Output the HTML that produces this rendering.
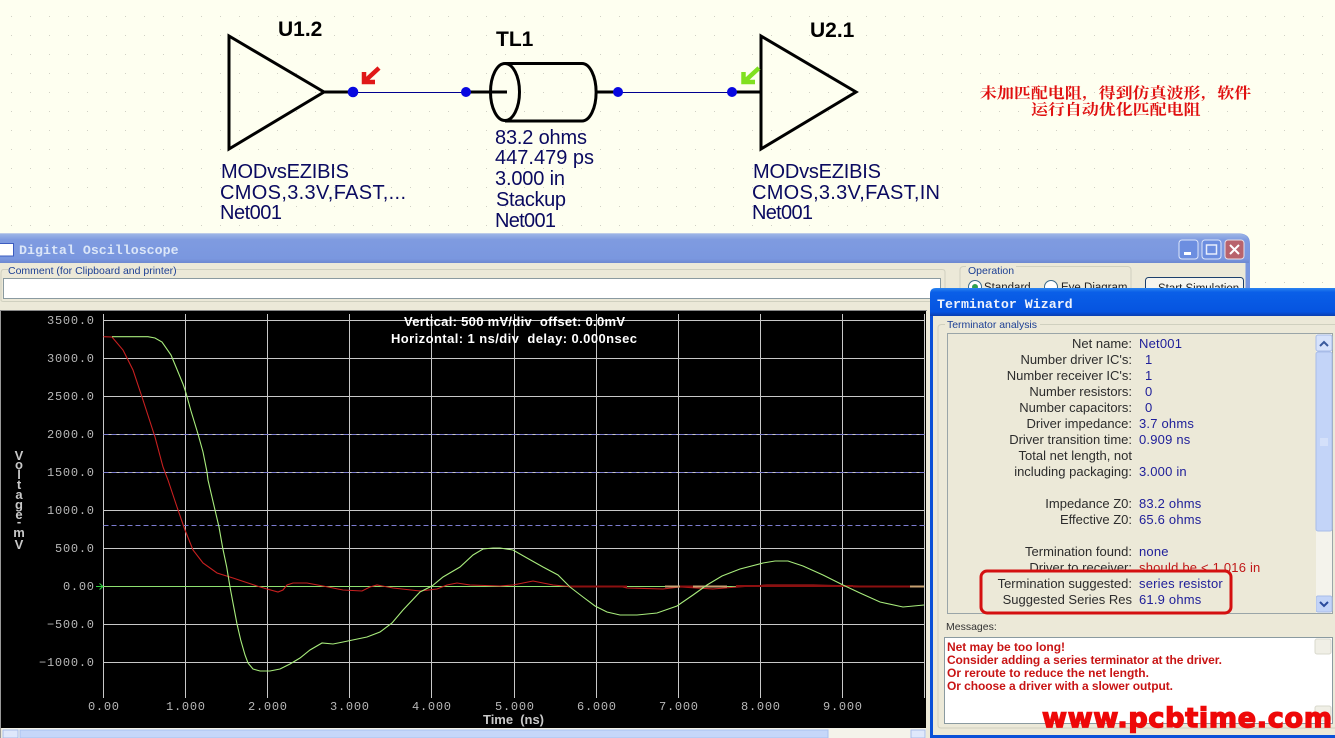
<!DOCTYPE html>
<html><head><meta charset="utf-8"><style>
html,body{margin:0;padding:0;background:#fefff0;overflow:hidden}
svg{display:block}
text{font-family:"Liberation Sans","Noto Sans CJK SC",sans-serif;white-space:pre}
.n{fill:#0a0a60;font-size:20px}
.a{fill:#b8b8b8;font-family:"Liberation Mono",monospace;font-size:12px}
.l{fill:#2c2c2c;font-size:13px;text-anchor:end}
.v{fill:#20209a;font-size:13px;letter-spacing:.2px}
.m{fill:#c81414;font-size:12px;font-weight:bold}
.g{fill:#1c3f94;font-size:10.5px}
.c{font-family:"Noto Serif CJK SC",serif;font-size:15px;font-weight:bold;fill:#e01010}
.tt{font-family:"Liberation Mono",monospace;font-size:13.300px;font-weight:bold}
</style></head><body>
<svg width="1335" height="738" viewBox="0 0 1335 738" xmlns="http://www.w3.org/2000/svg">
<defs>
<pattern id="d" x="11" y="16" width="19" height="19" patternUnits="userSpaceOnUse"><rect width="1" height="1" fill="#d0d0c4"/></pattern>
<linearGradient id="t1" x1="0" y1="0" x2="0" y2="1"><stop offset="0" stop-color="#9db5e6"/><stop offset=".2" stop-color="#7f9be0"/><stop offset=".85" stop-color="#7a97df"/><stop offset="1" stop-color="#6d88d0"/></linearGradient>
<linearGradient id="t2" x1="0" y1="0" x2="0" y2="1"><stop offset="0" stop-color="#2a85f0"/><stop offset=".15" stop-color="#0a5fe8"/><stop offset=".85" stop-color="#0654e0"/><stop offset="1" stop-color="#0a3fb0"/></linearGradient>
</defs>
<rect width="1335" height="738" fill="#fefff0"/>
<rect width="1335" height="238" fill="url(#d)"/>
<rect x="1250" y="230" width="85" height="60" fill="url(#d)"/>

<!-- schematic -->
<g fill="none" stroke="#000" stroke-width="3">
<path d="M229 36V149L324 92Z"/>
<path d="M761 36V149L856 92Z"/>
<path d="M324 92H353M466 92H507M596 92H618M732 92H761"/>
<ellipse cx="505" cy="92" rx="14.500" ry="28.500"/>
<path d="M505 63.500H582A14 28.500 0 0 1 582 121H505"/>
</g>
<path d="M353 92.500H466M618 92.500H732" stroke="#000090" stroke-width="1"/>
<g fill="#0808e0"><circle cx="353" cy="92" r="5.300"/><circle cx="466" cy="92" r="5"/><circle cx="618" cy="92" r="5"/><circle cx="732" cy="92" r="5"/></g>
<path d="M379 68L366 80M364 72V82H375" fill="none" stroke="#e01818" stroke-width="4.500"/>
<path d="M759 68L746 80M743.500 72V82H755" fill="none" stroke="#80e020" stroke-width="4.500"/>
<text x="278" y="36" font-size="21" font-weight="bold">U1.2</text>
<text x="496" y="46" font-size="21" font-weight="bold">TL1</text>
<text x="810" y="37" font-size="21" font-weight="bold">U2.1</text>
<text class="n" x="221" y="178" textLength="128">MODvsEZIBIS</text>
<text class="n" x="220" y="199" textLength="186">CMOS,3.3V,FAST,...</text>
<text class="n" x="220" y="219" textLength="62">Net001</text>
<text class="n" x="495" y="144" textLength="92">83.2 ohms</text>
<text class="n" x="495" y="164" textLength="99">447.479 ps</text>
<text class="n" x="495" y="185" textLength="70">3.000 in</text>
<text class="n" x="496" y="206" textLength="70">Stackup</text>
<text class="n" x="495" y="227" textLength="61">Net001</text>
<text class="n" x="753" y="178" textLength="128">MODvsEZIBIS</text>
<text class="n" x="752" y="199" textLength="188">CMOS,3.3V,FAST,IN</text>
<text class="n" x="752" y="219" textLength="61">Net001</text>
<text class="c" transform="translate(980 98) scale(1.130 1)" x="0 15 30 45 60 75 90 105 120 135 150 165 180 195 210 225">未加匹配电阻,得到仿真波形,软件</text>
<text class="c" transform="translate(1031 114.500) scale(1.130 1)" x="0 15 30 45 60 75 90 105 120 135">运行自动优化匹配电阻</text>

<!-- oscilloscope window -->
<path d="M0 233.500H1240Q1250 234 1250 244V738H0Z" fill="#7a97df"/>
<path d="M0 234H1240Q1249 234 1249 244V263H0Z" fill="url(#t1)"/>
<rect x="0" y="263" width="1247" height="475" fill="#ece9d8"/>
<path d="M1247 263V738" stroke="#7a97df" stroke-width="3"/>
<path d="M-1 243.500H13.500V256H-1Z" fill="#fff" stroke="#3c5cc0"/>
<text class="tt" x="19" y="254" fill="#dbe6f8">Digital Oscilloscope</text>
<g>
<rect x="1179" y="240" width="19" height="19" rx="3" fill="#6c8ee0" stroke="#dde6fa"/>
<rect x="1184" y="252" width="7" height="3" fill="#fff"/>
<rect x="1202" y="240" width="19" height="19" rx="3" fill="#6c8ee0" stroke="#dde6fa"/>
<rect x="1206.500" y="245" width="10" height="9" fill="none" stroke="#e8eefc" stroke-width="1.500"/>
<rect x="1225" y="240" width="19" height="19" rx="3" fill="#b8636c" stroke="#e8dfe4"/>
<path d="M1230 245L1239 254M1239 245L1230 254" stroke="#fff" stroke-width="2"/>
</g>
<path d="M8 269.500H3Q1 270 1 274V300Q1 301.500 4 301.500H944Q945 301 945 298V272Q945 269.500 942 269.500H176" fill="none" stroke="#d0d0bf"/>
<text class="g" x="8" y="274">Comment (for Clipboard and printer)</text>
<rect x="3.500" y="278.500" width="937" height="20" fill="#fff" stroke="#8a9aa0"/>
<path d="M1016 266.500H1128Q1131 267 1131 270V300M966 266.500H963Q960 267 960 270V300" fill="none" stroke="#d0d0bf"/>
<text class="g" x="968" y="274">Operation</text>
<circle cx="975" cy="287" r="6.500" fill="#fff" stroke="#3a6a8a"/><circle cx="975" cy="287" r="3" fill="#30a050"/>
<text x="984" y="291" font-size="11.500" fill="#222">Standard</text>
<circle cx="1051" cy="287" r="6.500" fill="#fff" stroke="#3a6a8a"/>
<text x="1061" y="291" font-size="11.500" fill="#222">Eye Diagram</text>
<rect x="1145.500" y="277.500" width="98" height="24" rx="3" fill="#f6f5ee" stroke="#1c3f6c"/>
<text x="1158" y="292" font-size="11.500" fill="#222">Start Simulation</text>

<!-- plot -->
<rect x="0" y="310" width="927" height="1" fill="#888"/>
<rect x="0" y="311" width="926" height="417" fill="#000"/>
<rect x="0" y="311" width="1" height="427" fill="#999"/>
<g stroke="#c8c8c8" stroke-width="1">
<path d="M103.500 320.500H924.500M103.500 358.500H924.500M103.500 396.500H924.500M103.500 434.500H924.500M103.500 472.500H924.500M103.500 510.500H924.500M103.500 548.500H924.500M103.500 586.500H924.500M103.500 624.500H924.500M103.500 662.500H924.500"/>
<path d="M103.500 314V698M185.500 314V698M267.500 314V698M349.500 314V698M431.500 314V698M514.500 314V698M596.500 314V698M678.500 314V698M760.500 314V698M842.500 314V698M924.500 314V698"/>
</g>
<g stroke="#7c7cd0" stroke-width="1" stroke-dasharray="5 3">
<path d="M103.500 434.500H924.500M103.500 472.500H924.500M103.500 525.500H924.500"/>
</g>
<rect x="104" y="525" width="820" height="1" fill="#000" opacity="0"/>
<g>
<text class="a" x="94" y="324" text-anchor="end" textLength="47">3500.0</text>
<text class="a" x="94" y="362" text-anchor="end" textLength="47">3000.0</text>
<text class="a" x="94" y="400" text-anchor="end" textLength="47">2500.0</text>
<text class="a" x="94" y="438" text-anchor="end" textLength="47">2000.0</text>
<text class="a" x="94" y="476" text-anchor="end" textLength="47">1500.0</text>
<text class="a" x="94" y="514" text-anchor="end" textLength="47">1000.0</text>
<text class="a" x="94" y="552" text-anchor="end" textLength="39">500.0</text>
<text class="a" x="94" y="590" text-anchor="end" textLength="31">0.00</text>
<text class="a" x="94" y="628" text-anchor="end" textLength="47">−500.0</text>
<text class="a" x="94" y="666" text-anchor="end" textLength="55">−1000.0</text>
</g>
<g>
<text class="a" x="88" y="710" textLength="31">0.00</text>
<text class="a" x="166" y="710" textLength="39">1.000</text>
<text class="a" x="248" y="710" textLength="39">2.000</text>
<text class="a" x="330" y="710" textLength="39">3.000</text>
<text class="a" x="412" y="710" textLength="39">4.000</text>
<text class="a" x="495" y="710" textLength="39">5.000</text>
<text class="a" x="577" y="710" textLength="39">6.000</text>
<text class="a" x="659" y="710" textLength="39">7.000</text>
<text class="a" x="741" y="710" textLength="39">8.000</text>
<text class="a" x="823" y="710" textLength="39">9.000</text>
</g>
<text x="483" y="724" font-size="13" font-weight="bold" fill="#c8c8c8" textLength="61">Time  (ns)</text>
<g font-size="13" font-weight="bold" fill="#c8c8c8" text-anchor="middle">
<text x="19" y="460">V</text><text x="19" y="469">o</text><text x="19" y="479">l</text><text x="19" y="489">t</text><text x="19" y="499">a</text><text x="19" y="509">g</text><text x="19" y="519">e</text><text x="19" y="526">-</text><text x="19" y="537">m</text><text x="19" y="549">V</text>
</g>
<text x="404" y="326" font-size="13" font-weight="bold" fill="#fff" textLength="221">Vertical: 500 mV/div  offset: 0.0mV</text>
<text x="391" y="343" font-size="13" font-weight="bold" fill="#fff" textLength="246">Horizontal: 1 ns/div  delay: 0.000nsec</text>
<path d="M96 586.500H103M99.500 583.500L103 586.500L99.500 589.500" fill="none" stroke="#30d040"/>
<!-- traces -->
<path d="M103.500 586.500H924" stroke="#8ee070" stroke-width="1"/>
<path d="M103.500 336.700L112 337L123 350L133 370L143 400L155 437L163 467L168 480L177 507L185 530L193 550L203 563L217 573L233 578L257 586L267 589L278 592L283 590L287 585L293 583L307 583L323 586L343 590L362 591L370 587L377 585L393 588L420 591L437 589L447 585L457 583L470 585L500 586L513 585L533 581L553 585L570 586.500L618 586L627 588L663 589L680 587L713 589L737 587L767 585L813 585L860 586L924 586.500" fill="none" stroke="#c82020" stroke-width="1.100"/>
<path d="M568 586.500H627M680 586.500H693M736 586H853M853 586.500H910" stroke="#8c1010" stroke-width="2" fill="none"/>
<path d="M665 586.500H680M693 586.500H727M910 586.500H924" stroke="#c8a070" stroke-width="2" fill="none"/>
<path d="M112 336.700H148L155 338L162 342L171 355L176 367L183 384L186 393L191 411L198 434L203 452L207 472L208 480L215 510L219 527L222.700 548L226.700 567L230 587L233 603L237 624L240.700 640L245 655L248 663L253 669L260 671L270 671L280 669L290 664L300 658L310 650L322 643L333 644L343 642L367 637L380 632L392 623L403 610L420 592L432 586L443 577L460 567L473 555L483 549L493 548L500 548L513 550L527 558L543 567L558 575L570 587L583 597L595 606L607 612L620 615L637 615L657 613L677 606L693 595L707 585L722 576L740 569L763 563L775 561L788 561L803 566L823 575L843 585L860 593L880 602L903 607L924 605" fill="none" stroke="#a8ec7c" stroke-width="1.100"/>
<!-- bottom scrollbar -->
<rect x="2" y="728" width="926" height="10" fill="#f4f3ea"/>
<rect x="3" y="730" width="15" height="8" fill="#dfe8fb" stroke="#a8bce8"/>
<rect x="20" y="730" width="808" height="8" fill="#c6d7f9" stroke="#a8c0f0"/>
<rect x="911" y="730" width="14" height="8" fill="#dfe8fb" stroke="#a8bce8"/>
<rect x="926" y="311" width="2" height="427" fill="#ece9d8"/>

<!-- terminator window -->
<rect x="930" y="294" width="405" height="444" fill="#0a50d8"/>
<path d="M930 316V294Q930 288 936 288H1335V316Z" fill="url(#t2)"/>
<rect x="933" y="316" width="402" height="419" fill="#ece9d8"/>
<text class="tt" x="937" y="308" fill="#eef2fc">Terminator Wizard</text>
<path d="M945 324.500H941Q938 325 938 328V725Q938 728 941 728H1335M1040 324.500H1335" fill="none" stroke="#d0d0bf"/>
<text class="g" x="947" y="328" textLength="90">Terminator analysis</text>
<rect x="947.500" y="333.500" width="385" height="280" fill="#ece9d8" stroke="#9aa5a8"/>
<rect x="1316" y="334" width="16" height="279" fill="#f4f3ec"/>
<rect x="1316" y="335" width="16" height="16" rx="2" fill="#d6e2fb" stroke="#a8bce8"/>
<path d="M1320 346L1324 342L1328 346" fill="none" stroke="#3a5a9c" stroke-width="2"/>
<rect x="1316" y="352" width="16" height="179" rx="2" fill="#c3d4f8" stroke="#a8bce8"/>
<path d="M1320 439H1328M1320 441H1328M1320 443H1328M1320 445H1328" stroke="#e4ecfc"/>
<rect x="1316" y="596" width="16" height="16" rx="2" fill="#c3d4f8" stroke="#a8bce8"/>
<path d="M1320 602L1324 606L1328 602" fill="none" stroke="#2a4a9c" stroke-width="2"/>
<text class="l" x="1132" y="348">Net name:</text><text class="v" x="1139" y="348">Net001</text>
<text class="l" x="1132" y="364">Number driver IC's:</text><text class="v" x="1145" y="364">1</text>
<text class="l" x="1132" y="380">Number receiver IC's:</text><text class="v" x="1145" y="380">1</text>
<text class="l" x="1132" y="396">Number resistors:</text><text class="v" x="1145" y="396">0</text>
<text class="l" x="1132" y="412">Number capacitors:</text><text class="v" x="1145" y="412">0</text>
<text class="l" x="1132" y="428">Driver impedance:</text><text class="v" x="1139" y="428">3.7 ohms</text>
<text class="l" x="1132" y="444">Driver transition time:</text><text class="v" x="1139" y="444">0.909 ns</text>
<text class="l" x="1132" y="460">Total net length, not</text>
<text class="l" x="1132" y="476">including packaging:</text><text class="v" x="1139" y="476">3.000 in</text>
<text class="l" x="1132" y="508">Impedance Z0:</text><text class="v" x="1139" y="508">83.2 ohms</text>
<text class="l" x="1132" y="524">Effective Z0:</text><text class="v" x="1139" y="524">65.6 ohms</text>
<text class="l" x="1132" y="556">Termination found:</text><text class="v" x="1139" y="556">none</text>
<text class="l" x="1132" y="572">Driver to receiver:</text>
<text x="1139" y="572" font-size="13" fill="#c01818" letter-spacing=".2">should be &lt; 1.016 in</text>
<rect x="948" y="572" width="368" height="41" fill="#ece9d8"/>
<text class="l" x="1132" y="588">Termination suggested:</text><text class="v" x="1139" y="588">series resistor</text>
<text class="l" x="1132" y="604">Suggested Series Res</text><text class="v" x="1139" y="604">61.9 ohms</text>
<rect x="981" y="571" width="250" height="42" rx="6" fill="none" stroke="#d41010" stroke-width="3"/>
<text x="946" y="630" font-size="10.500" fill="#333">Messages:</text>
<rect x="944.500" y="637.500" width="388" height="86" fill="#fff" stroke="#8a9aa0"/>
<rect x="1315" y="639" width="16" height="15" rx="2" fill="#f0efe6" stroke="#d8d8cc"/>
<rect x="1315" y="706" width="16" height="15" rx="2" fill="#f0efe6" stroke="#d8d8cc"/>
<text class="m" x="947" y="651" textLength="118">Net may be too long!</text>
<text class="m" x="947" y="664" textLength="275">Consider adding a series terminator at the driver.</text>
<text class="m" x="947" y="677" textLength="202">Or reroute to reduce the net length.</text>
<text class="m" x="947" y="690" textLength="226">Or choose a driver with a slower output.</text>
<text x="1042" y="727" font-size="27" font-weight="bold" fill="#ee0808" stroke="#ee0808" stroke-width="1.400" textLength="290" style="font-family:'DejaVu Sans',sans-serif">www.pcbtime.com</text>
</svg>
</body></html>
